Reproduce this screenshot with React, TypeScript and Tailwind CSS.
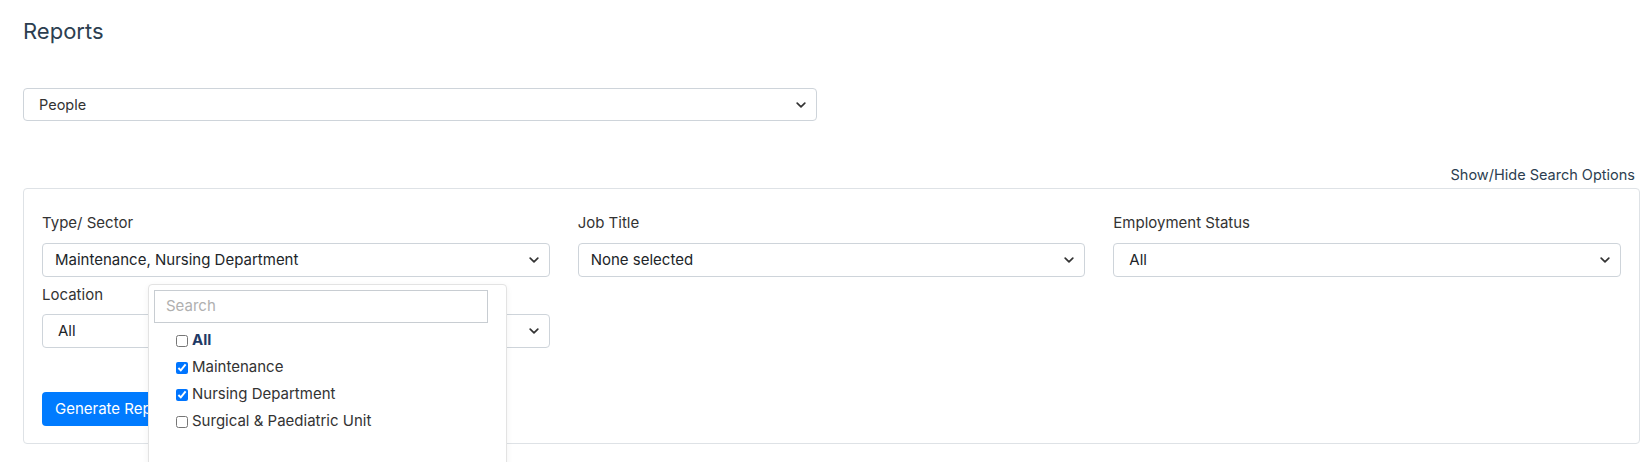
import React from "react";

const font = { fontFamily: "Inter, 'Noto Sans', sans-serif" };

function Chevron() {
  return (
    <svg width="10" height="6" viewBox="0 0 10 6" fill="none" className="shrink-0">
      <path d="M1.2 1.2L5 4.8l3.8-3.6" stroke="#333" strokeWidth="1.7" strokeLinecap="round" strokeLinejoin="round" />
    </svg>
  );
}

function SelectBox({ value, pl = "pl-[12px]" }: { value: string; pl?: string }) {
  return (
    <div className={`flex h-[34px] items-center justify-between rounded-[4px] border border-[#ced4da] bg-white ${pl} pr-[10px] text-[15px] text-[#212529]`}>
      <span>{value}</span>
      <Chevron />
    </div>
  );
}

function Item({ label, checked, bold }: { label: string; checked?: boolean; bold?: boolean }) {
  return (
    <label className="flex h-[27px] items-center gap-[4px] pl-[27px] text-[15px] text-[#333]">
      <input type="checkbox" defaultChecked={checked} className="m-0 h-[12px] w-[12px] accent-[#0075ff]" />
      <span className={bold ? "font-bold text-[#1e3a66]" : ""}>{label}</span>
    </label>
  );
}

export default function App() {
  return (
    <div className="h-[462px] overflow-hidden bg-white" style={font}>
      <div className="w-[1617px] pl-[23px] box-content">
        <h1 className="mt-[17px] text-[22px] leading-[28px] font-normal text-[#2c3e50]">Reports</h1>

        <div className="mt-[43px] flex h-[33px] w-[794px] items-center justify-between rounded-[4px] border border-[#ced4da] pl-[15px] pr-[10px] text-[14.5px] text-[#333]">
          <span>People</span>
          <Chevron />
        </div>

        <div className="mt-[44px] pr-[5px] text-right text-[14.5px] leading-[20px] text-[#2c3e50]">Show/Hide Search Options</div>

        <div className="mt-[3px] rounded-[4px] border border-[#dee2e6] px-[18px] pt-[24px] pb-[17px]">
          <div className="grid grid-cols-3 gap-x-[28px]">
            <div>
              <div className="mb-[10px] text-[15px] leading-[20px] text-[#333]">Type/ Sector</div>
              <div className="relative">
                <SelectBox value="Maintenance, Nursing Department" />
                <div className="absolute left-[106px] top-[41px] z-10 h-[220px] w-[359px] rounded-[4px] border border-[#e3e3e3] bg-white pt-[5px] shadow-[0_2px_6px_rgba(0,0,0,0.06)]">
                  <div className="ml-[5px] flex h-[33px] w-[334px] items-center border border-[#c8cdd2] pl-[11px] text-[15px] text-[#b0b0b0]">Search</div>
                  <div className="mt-[4px]">
                    <Item label="All" bold />
                    <Item label="Maintenance" checked />
                    <Item label="Nursing Department" checked />
                    <Item label="Surgical & Paediatric Unit" />
                  </div>
                </div>
              </div>
              <div className="mt-[8px] mb-[9px] text-[15px] leading-[20px] text-[#333]">Location</div>
              <SelectBox value="All" pl="pl-[15px]" />
            </div>
            <div>
              <div className="mb-[10px] text-[15px] leading-[20px] text-[#333]">Job Title</div>
              <SelectBox value="None selected" />
            </div>
            <div>
              <div className="mb-[10px] text-[15px] leading-[20px] text-[#333]">Employment Status</div>
              <SelectBox value="All" pl="pl-[15px]" />
            </div>
          </div>
          <button className="mt-[44px] h-[34px] rounded-[4px] bg-[#007bff] px-[13px] text-[15px] text-white">Generate Report</button>
        </div>
      </div>
    </div>
  );
}
